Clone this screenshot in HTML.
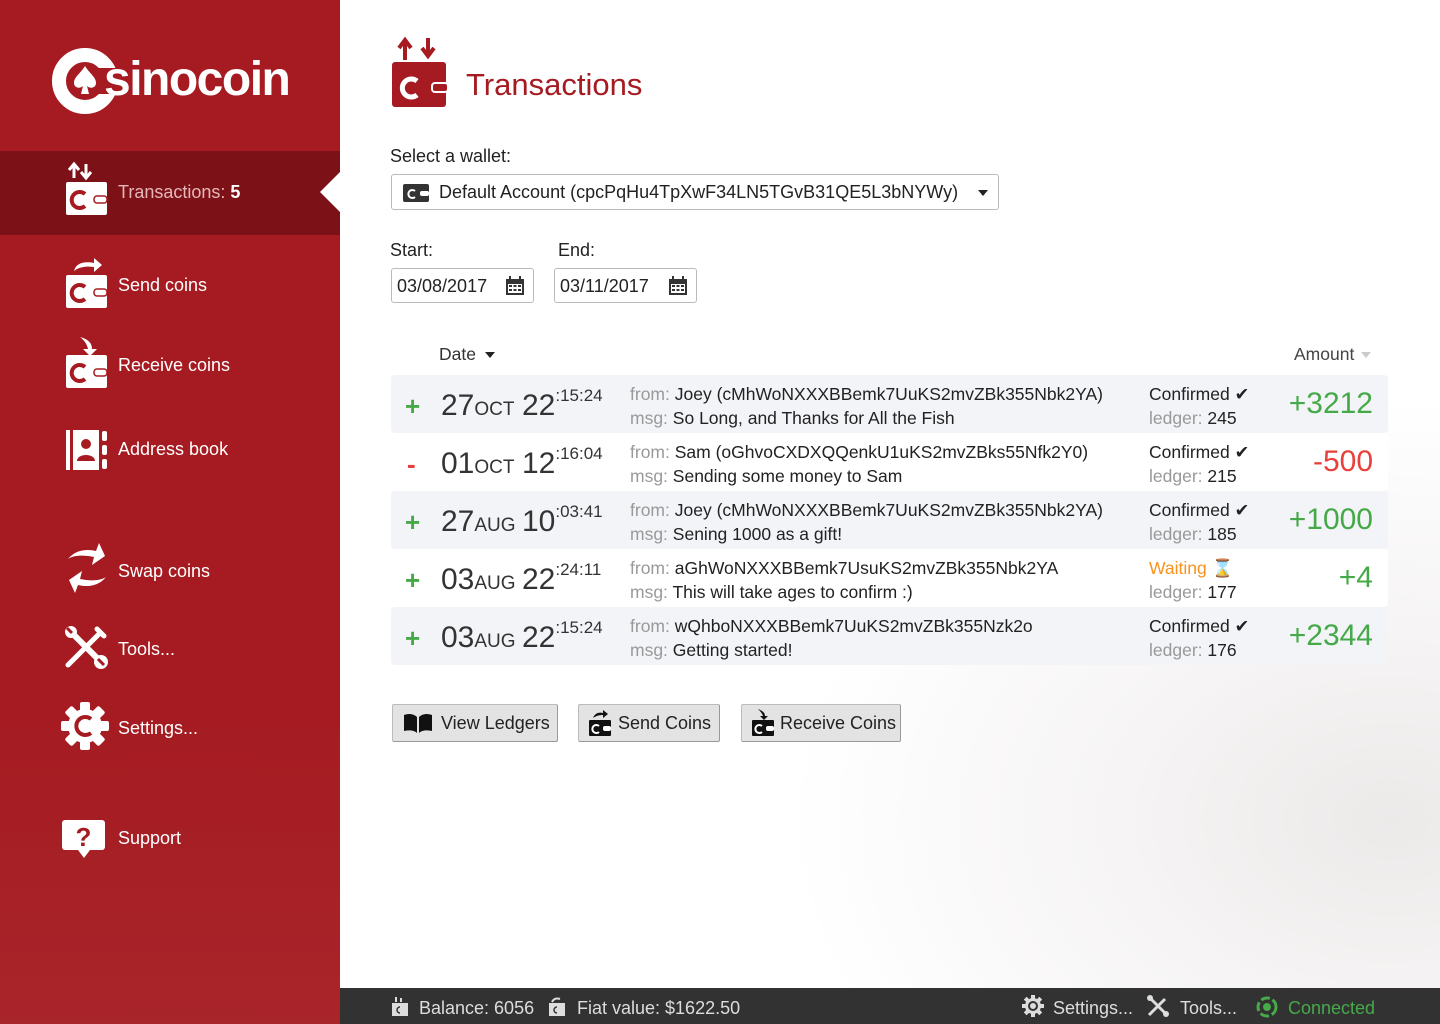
<!DOCTYPE html>
<html><head><meta charset="utf-8"><style>
*{margin:0;padding:0;box-sizing:border-box}
body{width:1440px;height:1024px;position:relative;overflow:hidden;font-family:"Liberation Sans",sans-serif;background:#fff;color:#222}
.side{position:absolute;left:0;top:0;width:340px;height:1024px;background:linear-gradient(180deg,#A61B21 0%,#A51B21 70%,#A8252A 100%)}
.nav{position:absolute;left:0;width:340px;color:#fff;font-size:18px}
.nav svg{position:absolute}
.nav span{position:absolute;left:118px}
.main{position:absolute;left:340px;top:0;width:1100px;height:988px;background:radial-gradient(ellipse 600px 420px at 1050px 820px,#ece9e9 0%,#f6f4f4 45%,#fff 100%)}
.abs{position:absolute}
.row{position:absolute;left:391px;width:997px;height:58px;border-radius:4px}
.row.g{background:#F3F4F8}
.row.w{background:#fff}
.sign{position:absolute;left:14px;top:16px;font-size:26px;font-weight:bold}
.date{position:absolute;left:50px;top:14px;font-size:30px;color:#333}
.date small{font-size:19px}
.time{position:absolute;left:131px;top:14px;font-size:30px;color:#333}
.time sup{font-size:17px;position:relative;top:-2px;vertical-align:top;line-height:1}
.info{position:absolute;left:239px;top:7px;font-size:17.5px;line-height:24px;color:#222}
.info i{font-style:normal;color:#999}
.stat{position:absolute;left:758px;top:7px;font-size:17.5px;line-height:24px}
.amt{position:absolute;right:15px;top:12px;font-size:30px}
.green{color:#45A948}.red{color:#E8403A}
.btn{position:absolute;top:704px;height:38px;background:#E3E3E3;border:1px solid #bbb;border-bottom-color:#999;border-right-color:#999;border-radius:2px;font-size:18px;color:#222;padding-top:8px}
.box{position:absolute;border:1px solid #bbb;border-radius:3px;background:#fff;font-size:18px;color:#222}
.foot{position:absolute;left:340px;top:988px;width:1100px;height:36px;background:#323232;color:#ddd;font-size:18px}
.foot span{position:absolute;top:10px}
</style></head><body>
<div class="side">
  <svg class="abs" style="left:50px;top:46px" width="70" height="70" viewBox="0 0 70 70">
    <circle cx="35" cy="35" r="26" fill="none" stroke="#fff" stroke-width="14"/>
    <rect x="48" y="22" width="24" height="26" fill="#A51B21"/>
    <path d="M35 20 C30 28 24 31 24 37 C24 42 30 43 33 40 L31 48 L39 48 L37 40 C40 43 46 42 46 37 C46 31 40 28 35 20Z" fill="#fff"/>
  </svg>
  <div class="abs" style="left:104px;top:52px;color:#fff;font-size:48px;letter-spacing:-1.5px;font-weight:bold">sinocoin</div>

  <div class="abs" style="left:0;top:151px;width:340px;height:84px;background:#7C1217"></div>
  <svg class="abs" style="left:318px;top:170px" width="24" height="44"><path d="M24 0 L2 22 L24 44Z" fill="#fff"/></svg>

  <div class="nav" style="top:160px">
    <svg style="left:66px;top:0" width="44" height="56" viewBox="0 0 44 56"><path d="M8 18V6M3 10L8 4L13 10M20 4V16M15 12L20 18L25 12" stroke="#fff" stroke-width="3" fill="none"/><rect x="0" y="22" width="41" height="33" rx="2" fill="#fff"/><path d="M19 34A8 8 0 1 0 19 46" fill="none" stroke="#A51B21" stroke-width="4"/><rect x="28" y="36" width="13" height="7" rx="3" fill="#fff" stroke="#A51B21" stroke-width="1.5"/></svg>
    <span style="top:22px;color:#e6b7b9">Transactions: <b style="color:#fff">5</b></span>
  </div>
  <div class="nav" style="top:255px">
    <svg style="left:66px;top:0" width="44" height="56" viewBox="0 0 44 56"><path d="M8 16C10 8 18 6 28 8V3L36 10L28 17V12C20 11 13 12 8 16Z" fill="#fff"/><rect x="0" y="20" width="41" height="33" rx="2" fill="#fff"/><path d="M19 32A8 8 0 1 0 19 44" fill="none" stroke="#A51B21" stroke-width="4"/><rect x="28" y="34" width="13" height="7" rx="3" fill="#fff" stroke="#A51B21" stroke-width="1.5"/></svg>
    <span style="top:20px">Send coins</span>
  </div>
  <div class="nav" style="top:335px">
    <svg style="left:66px;top:0" width="44" height="56" viewBox="0 0 44 56"><path d="M14 2C22 4 26 8 26 14H31L24 21L17 14H22C21 9 18 5 14 2Z" fill="#fff"/><rect x="0" y="20" width="41" height="33" rx="2" fill="#fff"/><path d="M19 32A8 8 0 1 0 19 44" fill="none" stroke="#A51B21" stroke-width="4"/><rect x="28" y="34" width="13" height="7" rx="3" fill="#fff" stroke="#A51B21" stroke-width="1.5"/></svg>
    <span style="top:20px">Receive coins</span>
  </div>
  <div class="nav" style="top:430px">
    <svg style="left:66px;top:0" width="44" height="42" viewBox="0 0 44 42"><rect x="0" y="0" width="4" height="40" fill="#fff"/><rect x="7" y="0" width="26" height="40" fill="#fff"/><circle cx="20" cy="14" r="5" fill="#A51B21"/><path d="M11 31C11 23 29 23 29 31Z" fill="#A51B21"/><rect x="36" y="1" width="5" height="10" rx="2" fill="#fff"/><rect x="36" y="15" width="5" height="10" rx="2" fill="#fff"/><rect x="36" y="29" width="5" height="10" rx="2" fill="#fff"/></svg>
    <span style="top:9px">Address book</span>
  </div>
  <div class="nav" style="top:543px">
    <svg style="left:66px;top:0" width="42" height="52" viewBox="0 0 42 52"><path d="M2 16C10 6 22 6 30 8L33 0L39 13L26 22L28 14C18 12 8 12 2 16Z" fill="#fff"/><path d="M40 34C32 44 20 44 12 42L9 50L3 37L16 28L14 36C24 38 34 38 40 34Z" fill="#fff"/></svg>
    <span style="top:18px">Swap coins</span>
  </div>
  <div class="nav" style="top:625px">
    <svg style="left:64px;top:0" width="44" height="44" viewBox="0 0 44 44"><path d="M4 40L36 8M33 4L40 11" stroke="#fff" stroke-width="5" stroke-linecap="round"/><path d="M6 6L38 38" stroke="#fff" stroke-width="6"/><circle cx="7" cy="7" r="6" fill="#fff"/><circle cx="37" cy="37" r="7" fill="#fff"/><path d="M3 3L8 8M34 34L40 40" stroke="#A51B21" stroke-width="3"/></svg>
    <span style="top:14px">Tools...</span>
  </div>
  <div class="nav" style="top:702px">
    <svg style="left:60px;top:0" width="50" height="48" viewBox="0 0 50 48"><g fill="#fff"><circle cx="25" cy="24" r="17"/><rect x="20" y="0" width="10" height="48" rx="2"/><rect x="1" y="19" width="48" height="10" rx="2"/><rect x="20" y="0" width="10" height="48" rx="2" transform="rotate(45 25 24)"/><rect x="20" y="0" width="10" height="48" rx="2" transform="rotate(-45 25 24)"/></g><path d="M31 17A9 9 0 1 0 31 31" fill="none" stroke="#A51B21" stroke-width="4"/></svg>
    <span style="top:16px">Settings...</span>
  </div>
  <div class="nav" style="top:808px">
    <svg style="left:62px;top:0" width="44" height="52" viewBox="0 0 44 52"><rect x="0" y="12" width="43" height="30" rx="3" fill="#fff"/><path d="M16 42L22 50L28 42Z" fill="#fff"/><text x="21.5" y="38" text-anchor="middle" font-family="Liberation Sans" font-weight="bold" font-size="26" fill="#A51B21">?</text></svg>
    <span style="top:20px">Support</span>
  </div>
</div>

<div class="main"></div>

<svg class="abs" style="left:390px;top:36px" width="60" height="72" viewBox="0 0 60 72"><path d="M15 24V6M9 12L15 4L21 12M38 2V18M32 12L38 20L44 12" stroke="#A51B21" stroke-width="4" fill="none"/><rect x="2" y="26" width="54" height="45" rx="3" fill="#A51B21"/><path d="M27 45A9 9 0 1 0 27 59" fill="none" stroke="#fff" stroke-width="5"/><rect x="42" y="47" width="16" height="9" rx="3" fill="#A51B21" stroke="#fff" stroke-width="2"/></svg>
<div class="abs" style="left:466px;top:67px;font-size:31px;color:#A51B21">Transactions</div>

<div class="abs" style="left:390px;top:146px;font-size:18px">Select a wallet:</div>
<div class="box" style="left:391px;top:174px;width:608px;height:36px">
  <svg class="abs" style="left:11px;top:9px" width="26" height="18" viewBox="0 0 26 18"><rect width="26" height="18" rx="2" fill="#333"/><path d="M12 7A4 4 0 1 0 12 13" fill="none" stroke="#fff" stroke-width="2"/><rect x="17" y="7" width="9" height="5" rx="2" fill="#fff"/></svg>
  <span class="abs" style="left:47px;top:7px">Default Account (cpcPqHu4TpXwF34LN5TGvB31QE5L3bNYWy)</span>
  <svg class="abs" style="left:586px;top:15px" width="10" height="6"><path d="M0 0H10L5 6Z" fill="#222"/></svg>
</div>

<div class="abs" style="left:390px;top:240px;font-size:18px">Start:</div>
<div class="abs" style="left:558px;top:240px;font-size:18px">End:</div>
<div class="box" style="left:391px;top:268px;width:143px;height:35px"><span class="abs" style="left:5px;top:7px">03/08/2017</span>
<svg class="abs" style="left:113px;top:7px" width="20" height="20" viewBox="0 0 20 20"><rect x="1" y="3" width="18" height="16" fill="#333"/><rect x="3" y="8" width="14" height="9" fill="#fff"/><g fill="#333"><rect x="4" y="9" width="3" height="2"/><rect x="8.5" y="9" width="3" height="2"/><rect x="13" y="9" width="3" height="2"/><rect x="4" y="13" width="3" height="2"/><rect x="8.5" y="13" width="3" height="2"/><rect x="13" y="13" width="3" height="2"/></g><rect x="4" y="0" width="2" height="5" fill="#333"/><rect x="14" y="0" width="2" height="5" fill="#333"/></svg></div>
<div class="box" style="left:554px;top:268px;width:143px;height:35px"><span class="abs" style="left:5px;top:7px">03/11/2017</span>
<svg class="abs" style="left:113px;top:7px" width="20" height="20" viewBox="0 0 20 20"><rect x="1" y="3" width="18" height="16" fill="#333"/><rect x="3" y="8" width="14" height="9" fill="#fff"/><g fill="#333"><rect x="4" y="9" width="3" height="2"/><rect x="8.5" y="9" width="3" height="2"/><rect x="13" y="9" width="3" height="2"/><rect x="4" y="13" width="3" height="2"/><rect x="8.5" y="13" width="3" height="2"/><rect x="13" y="13" width="3" height="2"/></g><rect x="4" y="0" width="2" height="5" fill="#333"/><rect x="14" y="0" width="2" height="5" fill="#333"/></svg></div>

<div class="abs" style="left:439px;top:344px;font-size:17.5px;color:#333">Date <svg width="10" height="6" style="margin-left:4px;vertical-align:middle"><path d="M0 0H10L5 6Z" fill="#222"/></svg></div>
<div class="abs" style="left:1294px;top:344px;font-size:17.5px;color:#444">Amount <svg width="10" height="6" style="margin-left:2px;vertical-align:middle"><path d="M0 0H10L5 6Z" fill="#ccc"/></svg></div>

<div class="row g" style="top:375px"><div class="sign green">+</div><div class="date">27<small>OCT</small></div><div class="time">22<sup>:15:24</sup></div><div class="info"><i>from:</i> Joey (cMhWoNXXXBBemk7UuKS2mvZBk355Nbk2YA)<br><i>msg:</i> So Long, and Thanks for All the Fish</div><div class="stat">Confirmed ✔<br><i style="font-style:normal;color:#999">ledger:</i> 245</div><div class="amt green">+3212</div></div>
<div class="row w" style="top:433px"><div class="sign red" style="left:16px">-</div><div class="date">01<small>OCT</small></div><div class="time">12<sup>:16:04</sup></div><div class="info"><i>from:</i> Sam (oGhvoCXDXQQenkU1uKS2mvZBks55Nfk2Y0)<br><i>msg:</i> Sending some money to Sam</div><div class="stat">Confirmed ✔<br><i style="font-style:normal;color:#999">ledger:</i> 215</div><div class="amt red">-500</div></div>
<div class="row g" style="top:491px"><div class="sign green">+</div><div class="date">27<small>AUG</small></div><div class="time">10<sup>:03:41</sup></div><div class="info"><i>from:</i> Joey (cMhWoNXXXBBemk7UuKS2mvZBk355Nbk2YA)<br><i>msg:</i> Sening 1000 as a gift!</div><div class="stat">Confirmed ✔<br><i style="font-style:normal;color:#999">ledger:</i> 185</div><div class="amt green">+1000</div></div>
<div class="row w" style="top:549px"><div class="sign green">+</div><div class="date">03<small>AUG</small></div><div class="time">22<sup>:24:11</sup></div><div class="info"><i>from:</i> aGhWoNXXXBBemk7UsuKS2mvZBk355Nbk2YA<br><i>msg:</i> This will take ages to confirm :)</div><div class="stat"><span style="color:#F7931E">Waiting ⌛</span><br><i style="font-style:normal;color:#999">ledger:</i> 177</div><div class="amt green">+4</div></div>
<div class="row g" style="top:607px"><div class="sign green">+</div><div class="date">03<small>AUG</small></div><div class="time">22<sup>:15:24</sup></div><div class="info"><i>from:</i> wQhboNXXXBBemk7UuKS2mvZBk355Nzk2o<br><i>msg:</i> Getting started!</div><div class="stat">Confirmed ✔<br><i style="font-style:normal;color:#999">ledger:</i> 176</div><div class="amt green">+2344</div></div>

<div class="btn" style="left:392px;width:166px;padding-left:48px">
<svg class="abs" style="left:10px;top:8px" width="30" height="20" viewBox="0 0 30 20"><path d="M1 2C6 0 11 1 14 4V20C11 17 6 17 1 18Z M29 2C24 0 19 1 16 4V20C19 17 24 17 29 18Z" fill="#111"/></svg>View Ledgers</div>
<div class="btn" style="left:578px;width:142px;padding-left:39px">
<svg class="abs" style="left:9px;top:4px" width="24" height="28" viewBox="0 0 24 28"><path d="M5 9C7 4 11 3 15 4V1L20 5L15 9V6C11 6 8 7 5 9Z" fill="#111"/><rect x="1" y="11" width="22" height="16" rx="1" fill="#111"/><path d="M11 17A4 4 0 1 0 11 23" fill="none" stroke="#fff" stroke-width="2"/><rect x="15" y="17" width="8" height="5" rx="2" fill="#fff"/></svg>Send Coins</div>
<div class="btn" style="left:741px;width:160px;padding-left:38px">
<svg class="abs" style="left:9px;top:4px" width="24" height="28" viewBox="0 0 24 28"><path d="M7 0C12 2 14 4 14 7H17L13 11L9 7H12C11 4 9 2 7 0Z" fill="#111"/><rect x="1" y="11" width="22" height="16" rx="1" fill="#111"/><path d="M11 17A4 4 0 1 0 11 23" fill="none" stroke="#fff" stroke-width="2"/><rect x="15" y="17" width="8" height="5" rx="2" fill="#fff"/></svg>Receive Coins</div>

<div class="foot">
  <svg class="abs" style="left:51px;top:8px" width="18" height="20" viewBox="0 0 18 20"><rect x="1" y="7" width="16" height="13" fill="#ddd"/><path d="M9 11A3 3 0 1 0 9 17" fill="none" stroke="#333" stroke-width="1.5"/><path d="M5 6V1M10 6V2" stroke="#ddd" stroke-width="2"/></svg>
  <span style="left:79px">Balance: 6056</span>
  <svg class="abs" style="left:208px;top:8px" width="18" height="20" viewBox="0 0 18 20"><rect x="1" y="7" width="16" height="13" fill="#ddd"/><path d="M9 11A3 3 0 1 0 9 17" fill="none" stroke="#333" stroke-width="1.5"/><path d="M4 6C6 2 9 2 12 3" stroke="#ddd" stroke-width="2" fill="none"/></svg>
  <span style="left:237px">Fiat value: $1622.50</span>
  <svg class="abs" style="left:682px;top:7px" width="22" height="22" viewBox="0 0 22 22"><g fill="#ddd"><circle cx="11" cy="11" r="8"/><rect x="9" y="0" width="4" height="22"/><rect x="0" y="9" width="22" height="4"/><rect x="9" y="0" width="4" height="22" transform="rotate(45 11 11)"/><rect x="9" y="0" width="4" height="22" transform="rotate(-45 11 11)"/></g><circle cx="11" cy="11" r="4" fill="none" stroke="#333" stroke-width="2"/></svg>
  <span style="left:713px">Settings...</span>
  <svg class="abs" style="left:807px;top:7px" width="22" height="22" viewBox="0 0 22 22"><path d="M2 20L18 4M2 2L20 20" stroke="#ddd" stroke-width="3"/><circle cx="3" cy="3" r="3" fill="#ddd"/><circle cx="19" cy="19" r="3" fill="#ddd"/></svg>
  <span style="left:840px">Tools...</span>
  <svg class="abs" style="left:916px;top:8px" width="22" height="22" viewBox="0 0 22 22"><circle cx="11" cy="11" r="9" fill="none" stroke="#46A94A" stroke-width="3" stroke-dasharray="9 3"/><circle cx="11" cy="11" r="4" fill="#46A94A"/></svg>
  <span style="left:948px;color:#46A94A">Connected</span>
</div>
</body></html>
